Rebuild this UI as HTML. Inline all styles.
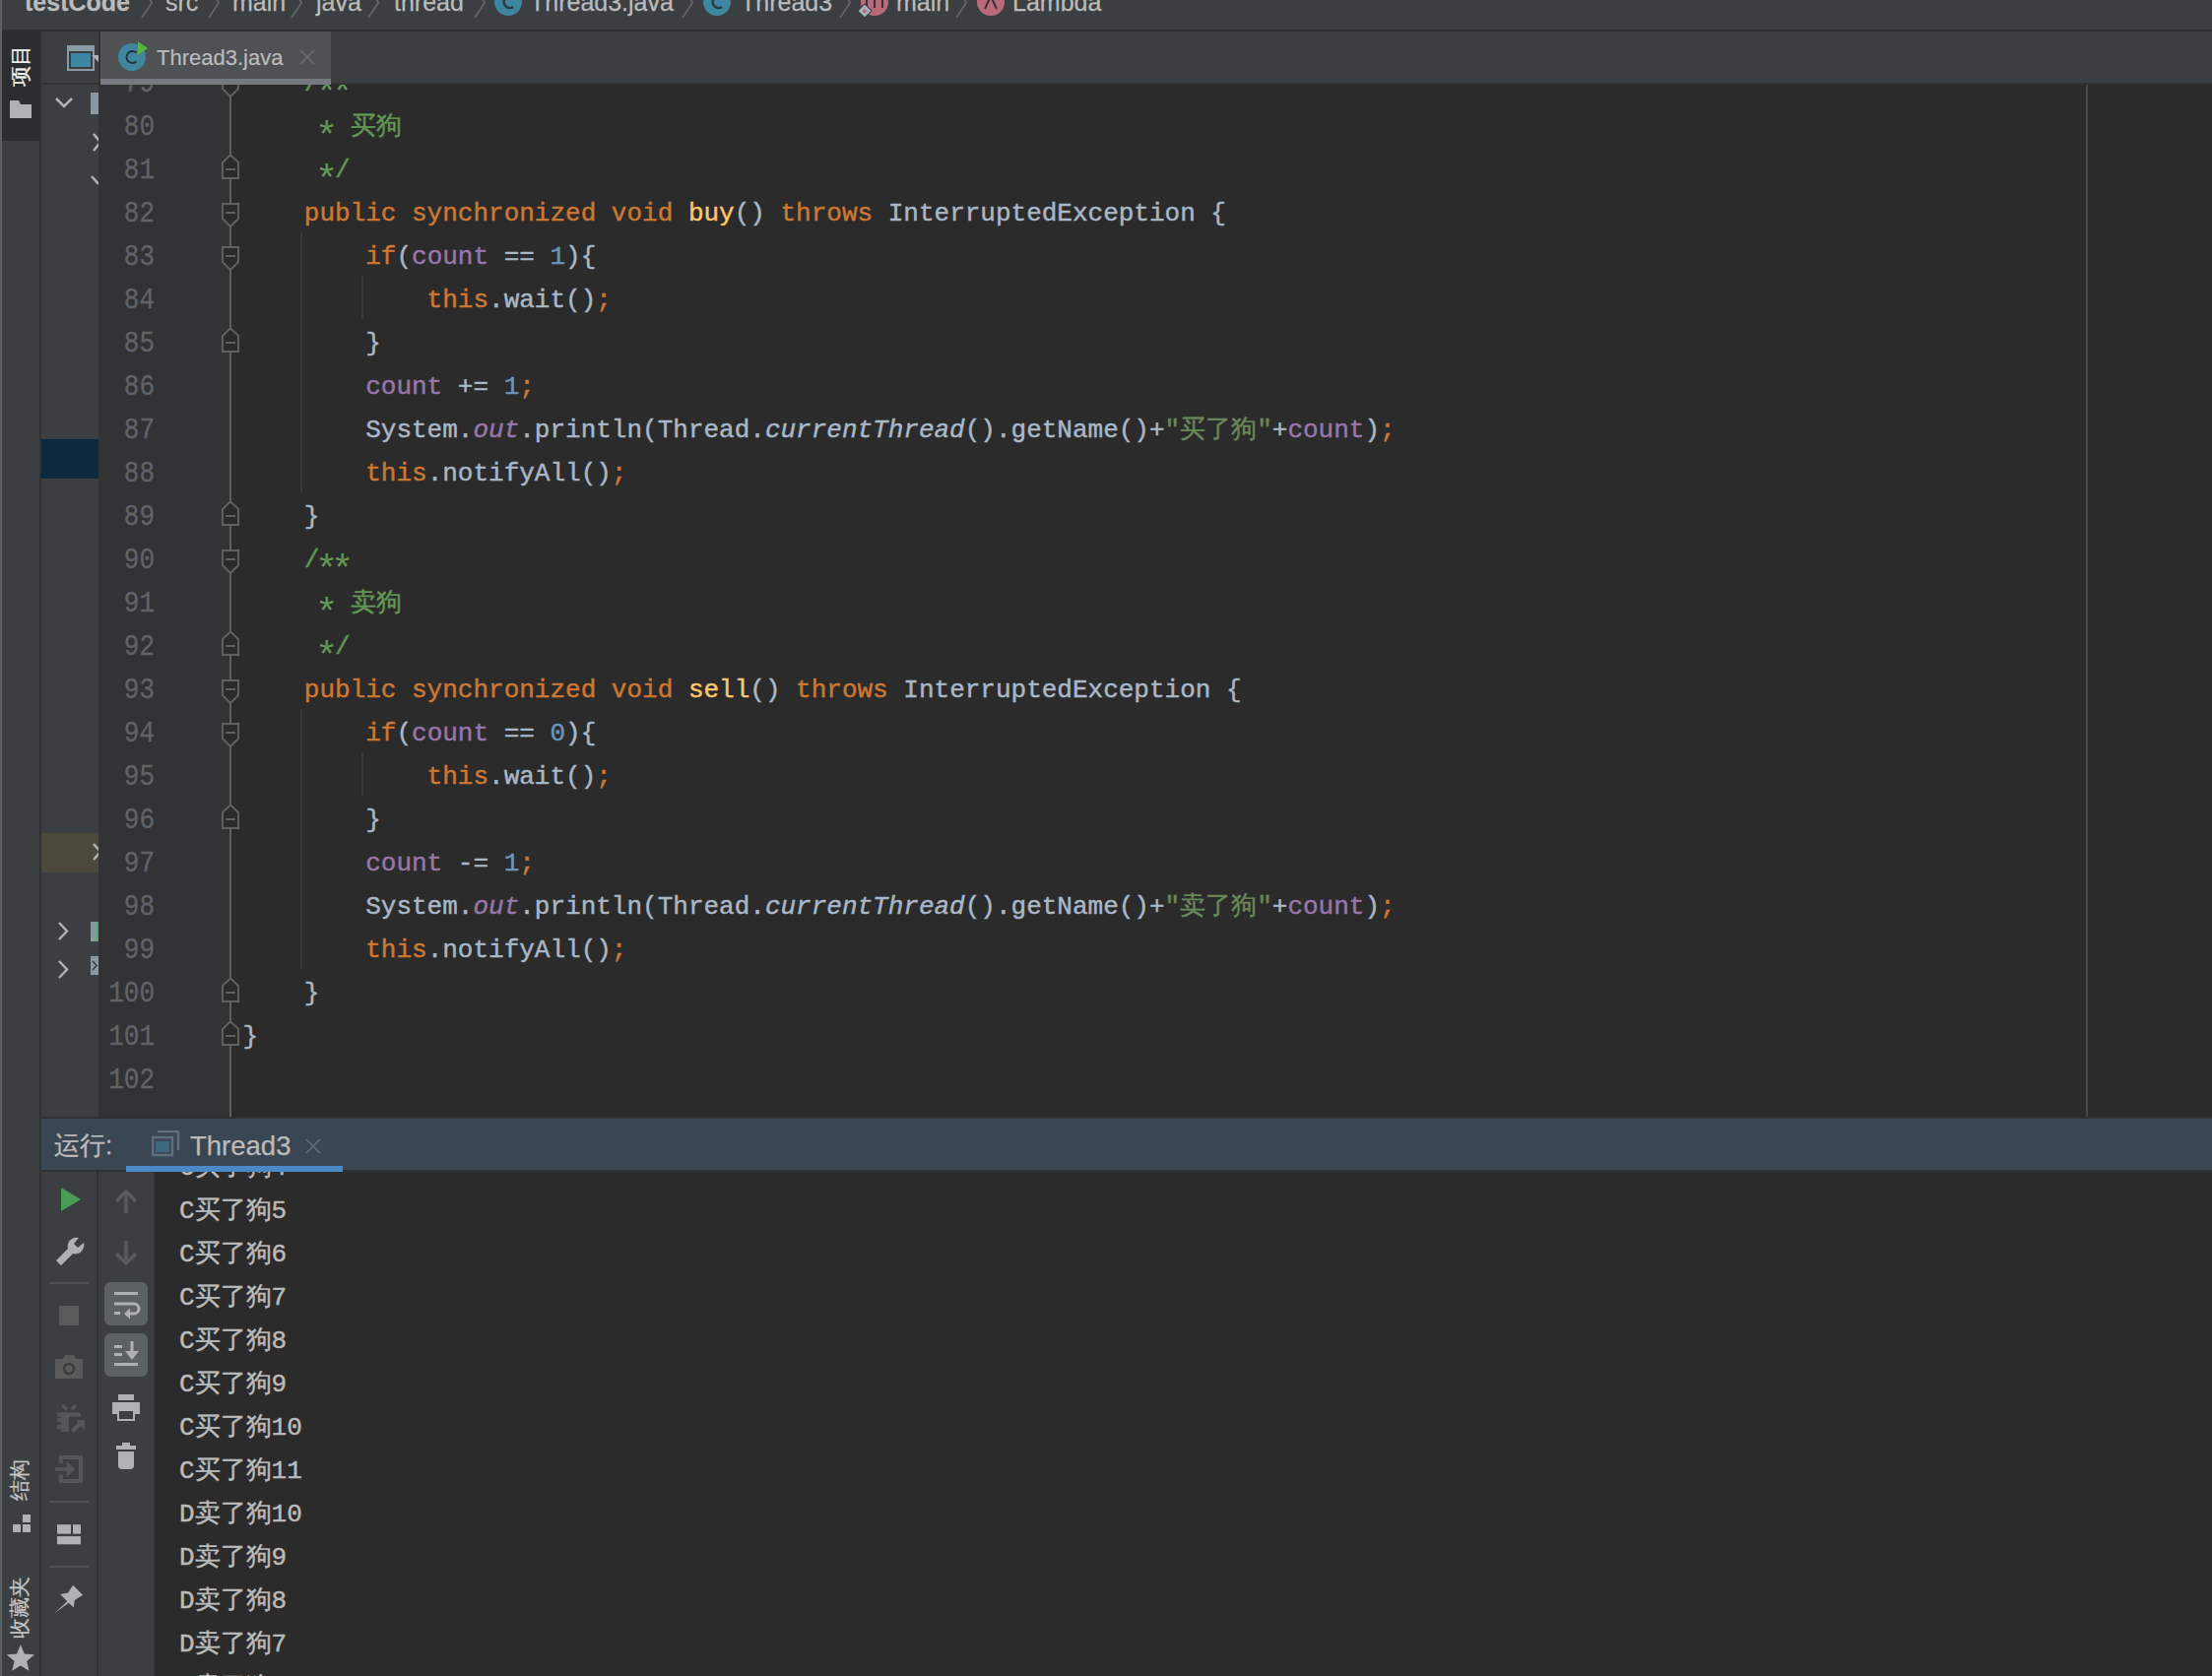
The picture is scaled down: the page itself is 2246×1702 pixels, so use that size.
<!DOCTYPE html>
<html><head><meta charset="utf-8">
<style>
*{margin:0;padding:0;box-sizing:border-box}
html,body{width:2246px;height:1702px;overflow:hidden;background:#2B2B2B}
body{position:relative;font-family:"Liberation Sans",sans-serif}
.a{position:absolute}
.mono{font-family:"Liberation Mono",monospace}
#crumbs{left:0;top:0;width:2246px;height:30px;background:#3C3F41}
.bc{position:absolute;top:-16px;font-size:25px;line-height:36px;color:#BBBBBB;white-space:pre;-webkit-text-stroke:0.25px currentColor}
.sep{position:absolute;top:0;width:12px;height:20px}
#edit{left:100px;top:86px;width:2146px;height:1048px;background:#2B2B2B;overflow:hidden}
#gutter{left:0;top:0;width:134px;height:1048px;background:#313335}
.cl{-webkit-text-stroke:0.45px currentColor;position:absolute;left:146.4px;height:44px;line-height:44px;font-size:26px;white-space:pre;font-family:"Liberation Mono",monospace}
.ln{-webkit-text-stroke:0.3px currentColor;transform:scaleY(1.11);transform-origin:0 20px;position:absolute;left:0;width:57px;height:44px;line-height:44px;font-size:26px;text-align:right;color:#606366;font-family:"Liberation Mono",monospace}
.ig{position:absolute;width:2px;background:#393939}
.ast{display:inline-block;transform:translate(0,10px) scale(1.5);-webkit-text-stroke:0}
.cn{-webkit-text-stroke:0.45px currentColor;position:absolute;left:25px;height:44px;line-height:44px;font-size:26px;white-space:pre;color:#BBBBBB;font-family:"Liberation Mono",monospace}
</style></head><body>

<!-- breadcrumb bar -->
<div id="crumbs" class="a">
  <div class="bc" style="left:25px;font-weight:bold">testCode</div>
  <div class="bc" style="left:168px">src</div>
  <div class="bc" style="left:236px">main</div>
  <div class="bc" style="left:321px">java</div>
  <div class="bc" style="left:400px">thread</div>
  <div class="bc" style="left:538px">Thread3.java</div>
  <div class="bc" style="left:752px">Thread3</div>
  <div class="bc" style="left:910px">main</div>
  <div class="bc" style="left:1028px">Lambda</div>
  <svg class="a" style="left:0;top:0" width="1200" height="29">
    <g stroke="#5E6366" stroke-width="2" fill="none">
      <path d="M144,18 L154,3 L149,-8"/>
      <path d="M212,18 L222,3 L217,-8"/>
      <path d="M296,18 L306,3 L301,-8"/>
      <path d="M374,18 L384,3 L379,-8"/>
      <path d="M482,18 L492,3 L487,-8"/>
      <path d="M693,18 L703,3 L698,-8"/>
      <path d="M853,18 L863,3 L858,-8"/>
      <path d="M971,18 L981,3 L976,-8"/>
    </g>
    <circle cx="516" cy="2" r="14" fill="#3E86A0"/>
    <path d="M521,-3 A6,6 0 1 0 521,7" stroke="#2B3A40" stroke-width="2.5" fill="none"/>
    <circle cx="728" cy="2" r="14" fill="#3E86A0"/>
    <path d="M733,-3 A6,6 0 1 0 733,7" stroke="#2B3A40" stroke-width="2.5" fill="none"/>
    <circle cx="888" cy="2" r="14" fill="#B96A7A"/>
    <path d="M880,8 V-2 M880,0 Q884,-5 888,0 V8 M888,0 Q892,-5 896,0 V8" stroke="#3A2F33" stroke-width="2" fill="none"/>
    <rect x="873" y="6" width="10" height="10" transform="rotate(45 878 11)" fill="#A3B1BB" stroke="#3C3F41" stroke-width="1"/><rect x="876.5" y="9.5" width="3.5" height="3.5" transform="rotate(45 878 11)" fill="#B96A7A"/>
    <circle cx="1006" cy="2" r="14" fill="#B96A7A"/>
    <path d="M1000,9 L1006,-4 L1012,9" stroke="#3A2F33" stroke-width="2" fill="none"/>
  </svg>
</div>
<div class="a" style="left:0;top:30px;width:2246px;height:2px;background:#2E2F30"></div>

<!-- far left window edge -->
<div class="a" style="left:0;top:0;width:2px;height:1702px;background:#5D6062"></div>

<!-- left tool strip -->
<div class="a" style="left:2px;top:32px;width:38px;height:1670px;background:#3C3F41"></div>
<div class="a" style="left:2px;top:32px;width:38px;height:111px;background:#2B2D2F"></div>
<div class="a" style="left:40px;top:32px;width:2px;height:1670px;background:#2F3133"></div>
<div class="a" style="left:9px;top:46px;width:42px;height:23px;transform-origin:0 0;transform:translate(0,42px) rotate(-90deg);font-size:21px;line-height:23px;color:#F0F0F0;-webkit-text-stroke:0.3px currentColor">项目</div>
<svg class="a" style="left:10px;top:102px" width="23" height="18"><path d="M0,0H9L11,4H22V18H0Z" fill="#AFB1B3"/></svg>

<!-- project panel -->
<div class="a" style="left:42px;top:32px;width:58px;height:1102px;background:#3C3F41"></div>
<div class="a" style="left:42px;top:84px;width:58px;height:2px;background:#323232"></div>
<svg class="a" style="left:68px;top:46px" width="32" height="27">
  <rect x="0" y="0" width="28" height="26" fill="#8A9BA5"/>
  <rect x="2" y="6" width="24" height="18" fill="#3A3D3F"/>
  <rect x="4" y="8" width="20" height="14" fill="#3D87A3"/>
  <path d="M25,10 L32,10 L32,17 Z" fill="#AFB1B3"/>
</svg>
<svg class="a" style="left:42px;top:86px" width="58" height="1048">
  <path d="M15,14 L23,22 L31,14" stroke="#AFB1B3" stroke-width="2.5" fill="none"/>
  <rect x="50" y="8" width="8" height="22" fill="#8A98A2"/>
  <path d="M53,50 L60,58.5 L53,67" stroke="#AFB1B3" stroke-width="2.5" fill="none"/>
  <path d="M51,93 L58,101" stroke="#AFB1B3" stroke-width="2.5" fill="none"/>
  <rect x="0" y="360" width="58" height="40" fill="#0D293E"/>
  <rect x="0" y="760" width="58" height="40" fill="#4B483E"/>
  <path d="M53,771 L60,779 L53,787" stroke="#AFB1B3" stroke-width="2.5" fill="none"/>
  <path d="M18,851 L26,859.5 L18,868" stroke="#AFB1B3" stroke-width="2.5" fill="none"/>
  <rect x="50" y="850" width="6" height="20" fill="#8A98A2"/>
  <rect x="56" y="850" width="2" height="20" fill="#59A869"/>
  <path d="M18,890 L26,898.5 L18,907" stroke="#AFB1B3" stroke-width="2.5" fill="none"/>
  <rect x="50" y="885" width="8" height="19" fill="#8A98A2"/><path d="M52,890 L56,894.5 L52,899" stroke="#3C3F41" stroke-width="1.6" fill="none"/>
</svg>

<!-- editor tabs row -->
<div class="a" style="left:100px;top:32px;width:2146px;height:54px;background:#3C3F41"></div>
<div class="a" style="left:100px;top:32px;width:2px;height:54px;background:#323232"></div>
<div class="a" style="left:336px;top:84px;width:1910px;height:2px;background:#323232"></div>
<div class="a" style="left:102px;top:32px;width:234px;height:48px;background:#4E5254"></div>
<div class="a" style="left:102px;top:80px;width:234px;height:6px;background:#747A80"></div>
<svg class="a" style="left:118px;top:40px" width="36" height="36">
  <circle cx="16" cy="18" r="14" fill="#3E86A0"/>
  <path d="M20.5,13.5 A6,6 0 1 0 20.5,22.5" stroke="#253238" stroke-width="2" fill="none"/>
  <path d="M22,2 L32,9 L22,16 Z" fill="#59B33E"/>
</svg>
<div class="a" style="left:159px;top:41px;font-size:22px;line-height:36px;color:#BBBBBB;white-space:pre;-webkit-text-stroke:0.2px currentColor">Thread3.java</div>
<svg class="a" style="left:304px;top:50px" width="16" height="16"><path d="M1,1 L15,15 M15,1 L1,15" stroke="#6B6E70" stroke-width="1.6"/></svg>

<!-- editor -->
<div id="edit" class="a">
  <div id="gutter" class="a"></div>
  <div class="ln" style="top:-23px">79</div>
<div class="ln" style="top:21px">80</div>
<div class="ln" style="top:65px">81</div>
<div class="ln" style="top:109px">82</div>
<div class="ln" style="top:153px">83</div>
<div class="ln" style="top:197px">84</div>
<div class="ln" style="top:241px">85</div>
<div class="ln" style="top:285px">86</div>
<div class="ln" style="top:329px">87</div>
<div class="ln" style="top:373px">88</div>
<div class="ln" style="top:417px">89</div>
<div class="ln" style="top:461px">90</div>
<div class="ln" style="top:505px">91</div>
<div class="ln" style="top:549px">92</div>
<div class="ln" style="top:593px">93</div>
<div class="ln" style="top:637px">94</div>
<div class="ln" style="top:681px">95</div>
<div class="ln" style="top:725px">96</div>
<div class="ln" style="top:769px">97</div>
<div class="ln" style="top:813px">98</div>
<div class="ln" style="top:857px">99</div>
<div class="ln" style="top:901px">100</div>
<div class="ln" style="top:945px">101</div>
<div class="ln" style="top:989px">102</div>
  <div class="ig" style="left:205px;top:150px;height:264px"></div><div class="ig" style="left:267px;top:194px;height:44px"></div><div class="ig" style="left:205px;top:634px;height:264px"></div><div class="ig" style="left:267px;top:678px;height:44px"></div>
  <svg class="a" style="left:134px;top:0;overflow:visible" width="2" height="1048">
    <rect x="-1" y="0" width="2" height="1048" fill="#5F5F5F"/>
    <path d="M-8,-11H8V4L0,12L-8,4Z" fill="#2B2B2B" stroke="#5F5F5F" stroke-width="2"/>
<line x1="-5" x2="5" y1="-2" y2="-2" stroke="#5F5F5F" stroke-width="2"/>
<path d="M0,71.5L8,79V95H-8V79Z" fill="#2B2B2B" stroke="#5F5F5F" stroke-width="2"/>
<line x1="-5" x2="5" y1="86" y2="86" stroke="#5F5F5F" stroke-width="2"/>
<path d="M-8,121H8V136L0,144L-8,136Z" fill="#2B2B2B" stroke="#5F5F5F" stroke-width="2"/>
<line x1="-5" x2="5" y1="130" y2="130" stroke="#5F5F5F" stroke-width="2"/>
<path d="M-8,165H8V180L0,188L-8,180Z" fill="#2B2B2B" stroke="#5F5F5F" stroke-width="2"/>
<line x1="-5" x2="5" y1="174" y2="174" stroke="#5F5F5F" stroke-width="2"/>
<path d="M0,247.5L8,255V271H-8V255Z" fill="#2B2B2B" stroke="#5F5F5F" stroke-width="2"/>
<line x1="-5" x2="5" y1="262" y2="262" stroke="#5F5F5F" stroke-width="2"/>
<path d="M0,423.5L8,431V447H-8V431Z" fill="#2B2B2B" stroke="#5F5F5F" stroke-width="2"/>
<line x1="-5" x2="5" y1="438" y2="438" stroke="#5F5F5F" stroke-width="2"/>
<path d="M-8,473H8V488L0,496L-8,488Z" fill="#2B2B2B" stroke="#5F5F5F" stroke-width="2"/>
<line x1="-5" x2="5" y1="482" y2="482" stroke="#5F5F5F" stroke-width="2"/>
<path d="M0,555.5L8,563V579H-8V563Z" fill="#2B2B2B" stroke="#5F5F5F" stroke-width="2"/>
<line x1="-5" x2="5" y1="570" y2="570" stroke="#5F5F5F" stroke-width="2"/>
<path d="M-8,605H8V620L0,628L-8,620Z" fill="#2B2B2B" stroke="#5F5F5F" stroke-width="2"/>
<line x1="-5" x2="5" y1="614" y2="614" stroke="#5F5F5F" stroke-width="2"/>
<path d="M-8,649H8V664L0,672L-8,664Z" fill="#2B2B2B" stroke="#5F5F5F" stroke-width="2"/>
<line x1="-5" x2="5" y1="658" y2="658" stroke="#5F5F5F" stroke-width="2"/>
<path d="M0,731.5L8,739V755H-8V739Z" fill="#2B2B2B" stroke="#5F5F5F" stroke-width="2"/>
<line x1="-5" x2="5" y1="746" y2="746" stroke="#5F5F5F" stroke-width="2"/>
<path d="M0,907.5L8,915V931H-8V915Z" fill="#2B2B2B" stroke="#5F5F5F" stroke-width="2"/>
<line x1="-5" x2="5" y1="922" y2="922" stroke="#5F5F5F" stroke-width="2"/>
<path d="M0,951.5L8,959V975H-8V959Z" fill="#2B2B2B" stroke="#5F5F5F" stroke-width="2"/>
<line x1="-5" x2="5" y1="966" y2="966" stroke="#5F5F5F" stroke-width="2"/>
  </svg>
  <div class="a" style="left:2018px;top:0;width:2px;height:1048px;background:#4A4A4A"></div>
  <div class="cl" style="top:-23px"><span style="color:#629755">    /<span class="ast">*</span><span class="ast">*</span></span></div>
<div class="cl" style="top:21px"><span style="color:#629755">     <span class="ast">*</span> 买狗</span></div>
<div class="cl" style="top:65px"><span style="color:#629755">     <span class="ast">*</span>/</span></div>
<div class="cl" style="top:109px"><span style="color:#CC7832">    public synchronized void </span><span style="color:#FFC66D">buy</span><span style="color:#A9B7C6">() </span><span style="color:#CC7832">throws </span><span style="color:#A9B7C6">InterruptedException {</span></div>
<div class="cl" style="top:153px"><span style="color:#CC7832">        if</span><span style="color:#A9B7C6">(</span><span style="color:#9876AA">count</span><span style="color:#A9B7C6"> == </span><span style="color:#6897BB">1</span><span style="color:#A9B7C6">){</span></div>
<div class="cl" style="top:197px"><span style="color:#CC7832">            this</span><span style="color:#A9B7C6">.wait()</span><span style="color:#CC7832">;</span></div>
<div class="cl" style="top:241px"><span style="color:#A9B7C6">        }</span></div>
<div class="cl" style="top:285px"><span style="color:#9876AA">        count</span><span style="color:#A9B7C6"> += </span><span style="color:#6897BB">1</span><span style="color:#CC7832">;</span></div>
<div class="cl" style="top:329px"><span style="color:#A9B7C6">        System.</span><span style="color:#9876AA;font-style:italic">out</span><span style="color:#A9B7C6">.println(Thread.</span><span style="color:#A9B7C6;font-style:italic">currentThread</span><span style="color:#A9B7C6">().getName()+</span><span style="color:#6A8759">&quot;买了狗&quot;</span><span style="color:#A9B7C6">+</span><span style="color:#9876AA">count</span><span style="color:#A9B7C6">)</span><span style="color:#CC7832">;</span></div>
<div class="cl" style="top:373px"><span style="color:#CC7832">        this</span><span style="color:#A9B7C6">.notifyAll()</span><span style="color:#CC7832">;</span></div>
<div class="cl" style="top:417px"><span style="color:#A9B7C6">    }</span></div>
<div class="cl" style="top:461px"><span style="color:#629755">    /<span class="ast">*</span><span class="ast">*</span></span></div>
<div class="cl" style="top:505px"><span style="color:#629755">     <span class="ast">*</span> 卖狗</span></div>
<div class="cl" style="top:549px"><span style="color:#629755">     <span class="ast">*</span>/</span></div>
<div class="cl" style="top:593px"><span style="color:#CC7832">    public synchronized void </span><span style="color:#FFC66D">sell</span><span style="color:#A9B7C6">() </span><span style="color:#CC7832">throws </span><span style="color:#A9B7C6">InterruptedException {</span></div>
<div class="cl" style="top:637px"><span style="color:#CC7832">        if</span><span style="color:#A9B7C6">(</span><span style="color:#9876AA">count</span><span style="color:#A9B7C6"> == </span><span style="color:#6897BB">0</span><span style="color:#A9B7C6">){</span></div>
<div class="cl" style="top:681px"><span style="color:#CC7832">            this</span><span style="color:#A9B7C6">.wait()</span><span style="color:#CC7832">;</span></div>
<div class="cl" style="top:725px"><span style="color:#A9B7C6">        }</span></div>
<div class="cl" style="top:769px"><span style="color:#9876AA">        count</span><span style="color:#A9B7C6"> -= </span><span style="color:#6897BB">1</span><span style="color:#CC7832">;</span></div>
<div class="cl" style="top:813px"><span style="color:#A9B7C6">        System.</span><span style="color:#9876AA;font-style:italic">out</span><span style="color:#A9B7C6">.println(Thread.</span><span style="color:#A9B7C6;font-style:italic">currentThread</span><span style="color:#A9B7C6">().getName()+</span><span style="color:#6A8759">&quot;卖了狗&quot;</span><span style="color:#A9B7C6">+</span><span style="color:#9876AA">count</span><span style="color:#A9B7C6">)</span><span style="color:#CC7832">;</span></div>
<div class="cl" style="top:857px"><span style="color:#CC7832">        this</span><span style="color:#A9B7C6">.notifyAll()</span><span style="color:#CC7832">;</span></div>
<div class="cl" style="top:901px"><span style="color:#A9B7C6">    }</span></div>
<div class="cl" style="top:945px"><span style="color:#A9B7C6">}</span></div>
<div class="cl" style="top:989px"></div>
</div>
<div class="a" style="left:42px;top:1134px;width:2204px;height:2px;background:#2F3133"></div>

<!-- run tool window header -->
<div class="a" style="left:42px;top:1136px;width:2204px;height:52px;background:#3B4653"></div>
<div class="a" style="left:42px;top:1188px;width:2204px;height:2px;background:#2F3133"></div>
<div class="a" style="left:55px;top:1146px;font-size:26px;line-height:34px;color:#BBBBBB;white-space:pre;-webkit-text-stroke:0.3px currentColor">运行:</div>
<svg class="a" style="left:154px;top:1148px" width="30" height="27">
  <path d="M6,1 H27 V20" stroke="#5E6E7D" stroke-width="2.5" fill="none"/>
  <rect x="1" y="7" width="20" height="18" fill="none" stroke="#5E6E7D" stroke-width="2.5"/>
  <rect x="4" y="11" width="14" height="11" fill="#3D6A80"/>
</svg>
<div class="a" style="left:193px;top:1145px;font-size:27.5px;line-height:38px;color:#BBBBBB;white-space:pre;-webkit-text-stroke:0.25px currentColor">Thread3</div>
<svg class="a" style="left:310px;top:1156px" width="16" height="16"><path d="M1,1 L15,15 M15,1 L1,15" stroke="#5E6E7D" stroke-width="1.6"/></svg>
<div class="a" style="left:128px;top:1184px;width:220px;height:6px;background:#4A88C7"></div>

<!-- run toolbars -->
<div class="a" style="left:42px;top:1190px;width:56px;height:512px;background:#3C3F41"></div>
<div class="a" style="left:98px;top:1190px;width:2px;height:512px;background:#2F3133"></div>
<div class="a" style="left:100px;top:1190px;width:56px;height:512px;background:#3C3F41"></div>
<div class="a" style="left:156px;top:1190px;width:1px;height:512px;background:#333"></div>
<svg class="a" style="left:42px;top:1190px" width="115" height="512">
  <!-- play -->
  <path d="M20,16 L40,28 L20,40 Z" fill="#499C54"/>
  <!-- wrench -->
  <path d="M15,90 L27,78 A9,9 0 0 1 38,67 L33,73 L37,77 L43,72 A9,9 0 0 1 32,83 L20,95 Z" fill="#AFB1B3"/>
  <rect x="8" y="112" width="40" height="2" fill="#4E5052"/>
  <!-- stop -->
  <rect x="18" y="136" width="20" height="20" fill="#5A5A5A"/>
  <!-- camera -->
  <path d="M14,190 H22 L24,186 H33 L35,190 H42 V210 H14 Z" fill="#5A5A5A"/>
  <circle cx="28" cy="200" r="5" fill="none" stroke="#3C3F41" stroke-width="2.5"/>
  <!-- bug disabled -->
  <path d="M21.5,237 L26,241.5 M35,237 L30.5,241.5" stroke="#565656" stroke-width="3.2"/>
  <rect x="16" y="244.5" width="24" height="4" fill="#565656"/>
  <rect x="19.5" y="244.5" width="8.5" height="19.5" fill="#565656"/>
  <rect x="16" y="250" width="5" height="4" fill="#565656"/>
  <rect x="16" y="257" width="5" height="4" fill="#565656"/>
  <path d="M31.5,263.5 L41,254" stroke="#565656" stroke-width="4"/>
  <path d="M35,252 H44 V263 Z" fill="#565656"/>
  <!-- exit -->
  <path d="M19.8,296 V290 H40 V314 H19.8 V307.5" stroke="#565656" stroke-width="4.2" fill="none"/>
  <path d="M14,302 H28" stroke="#565656" stroke-width="3.6"/>
  <path d="M25.6,293.8 L34.2,302 L25.6,310.2 Z" fill="#565656"/>
  <rect x="8" y="334" width="40" height="2" fill="#4E5052"/>
  <!-- layout -->
  <rect x="16" y="358.2" width="14" height="9.4" fill="#AFB1B3"/>
  <rect x="32" y="358.2" width="8" height="9.4" fill="#AFB1B3"/>
  <rect x="16" y="370.1" width="24" height="8.2" fill="#AFB1B3"/>
  <rect x="8" y="400" width="40" height="2" fill="#4E5052"/>
  <!-- pin -->
  <path d="M13.5,448 L26.3,436.3 L19.2,429.1 L27.1,427.4 L32.1,419.8 L42.1,429.8 L33.8,434.9 L32.8,442.4 L27.8,437.7 Z" fill="#AFB1B3"/>

  <!-- second toolbar (offset 58) -->
  <path d="M86,21 V42" stroke="#5A5A5A" stroke-width="3.5" fill="none"/><path d="M77.5,28.5 L86,20 L94.5,28.5" stroke="#5A5A5A" stroke-width="3.5" fill="none" stroke-linecap="square"/>
  <path d="M86,70 V93" stroke="#5A5A5A" stroke-width="3.5" fill="none"/><path d="M77.5,84.5 L86,93 L94.5,84.5" stroke="#5A5A5A" stroke-width="3.5" fill="none" stroke-linecap="square"/>
  <rect x="64" y="112" width="44" height="44" rx="6" fill="#5C6164"/>
  <rect x="74" y="122" width="24" height="3" fill="#AFB1B3"/>
  <path d="M74,134 H94 A5,5 0 0 1 94,144 H87" stroke="#AFB1B3" stroke-width="3" fill="none"/>
  <path d="M90,138.5 L84,144 L90,149.5 Z" fill="#AFB1B3"/>
  <rect x="74" y="142" width="6" height="3" fill="#AFB1B3"/>
  <rect x="64" y="164" width="44" height="44" rx="6" fill="#5C6164"/>
  <rect x="74" y="176" width="8" height="3" fill="#AFB1B3"/>
  <rect x="74" y="184" width="8" height="3" fill="#AFB1B3"/>
  <rect x="74" y="194" width="24" height="3" fill="#AFB1B3"/>
  <path d="M92,172 V186" stroke="#AFB1B3" stroke-width="3"/>
  <path d="M85,182 L99,182 L92,191 Z" fill="#AFB1B3"/>
  <!-- print -->
  <rect x="78" y="226" width="16" height="6" fill="#AFB1B3"/>
  <path d="M72,234 H100 V246 H72 Z" fill="#AFB1B3"/>
  <rect x="78" y="242" width="16" height="10" fill="#3C3F41" stroke="#AFB1B3" stroke-width="2"/>
  <!-- trash -->
  <rect x="76" y="278" width="20" height="4" fill="#AFB1B3"/>
  <rect x="82" y="275" width="8" height="3" fill="#AFB1B3"/>
  <path d="M78,284 H94 V298 Q94,302 90,302 H82 Q78,302 78,298 Z" fill="#AFB1B3"/>
</svg>

<!-- left strip lower items -->
<div class="a" style="left:9px;top:1480px;width:44px;height:22px;transform-origin:0 0;transform:translate(0,44px) rotate(-90deg);font-size:20.5px;line-height:22px;color:#C4C4C4;-webkit-text-stroke:0.25px currentColor">结构</div>
<svg class="a" style="left:12.5px;top:1538px" width="20" height="20">
  <rect x="10" y="0" width="8" height="8" fill="#AFB1B3"/>
  <rect x="0" y="10" width="8" height="8" fill="#AFB1B3"/>
  <rect x="10" y="10" width="8" height="8" fill="#AFB1B3"/>
</svg>
<div class="a" style="left:9px;top:1598px;width:66px;height:22px;transform-origin:0 0;transform:translate(0,66px) rotate(-90deg);font-size:21px;line-height:22px;color:#C4C4C4;-webkit-text-stroke:0.25px currentColor">收藏夹</div>
<svg class="a" style="left:0;top:0" width="42" height="1702">
  <path d="M20.9,1670.0 L24.8,1679.4 L35.0,1680.2 L27.2,1686.9 L29.6,1696.8 L20.9,1691.5 L12.2,1696.8 L14.6,1686.9 L6.8,1680.2 L17.0,1679.4 Z" fill="#AFB1B3"/>
</svg>

<!-- console -->
<div class="a" style="left:157px;top:1190px;width:2089px;height:512px;background:#2B2B2B;overflow:hidden">
<div class="cn" style="top:-26px">C买了狗4</div>
<div class="cn" style="top:18px">C买了狗5</div>
<div class="cn" style="top:62px">C买了狗6</div>
<div class="cn" style="top:106px">C买了狗7</div>
<div class="cn" style="top:150px">C买了狗8</div>
<div class="cn" style="top:194px">C买了狗9</div>
<div class="cn" style="top:238px">C买了狗10</div>
<div class="cn" style="top:282px">C买了狗11</div>
<div class="cn" style="top:326px">D卖了狗10</div>
<div class="cn" style="top:370px">D卖了狗9</div>
<div class="cn" style="top:414px">D卖了狗8</div>
<div class="cn" style="top:458px">D卖了狗7</div>
<div class="cn" style="top:502px">D卖了狗6</div>
</div>

</body></html>
